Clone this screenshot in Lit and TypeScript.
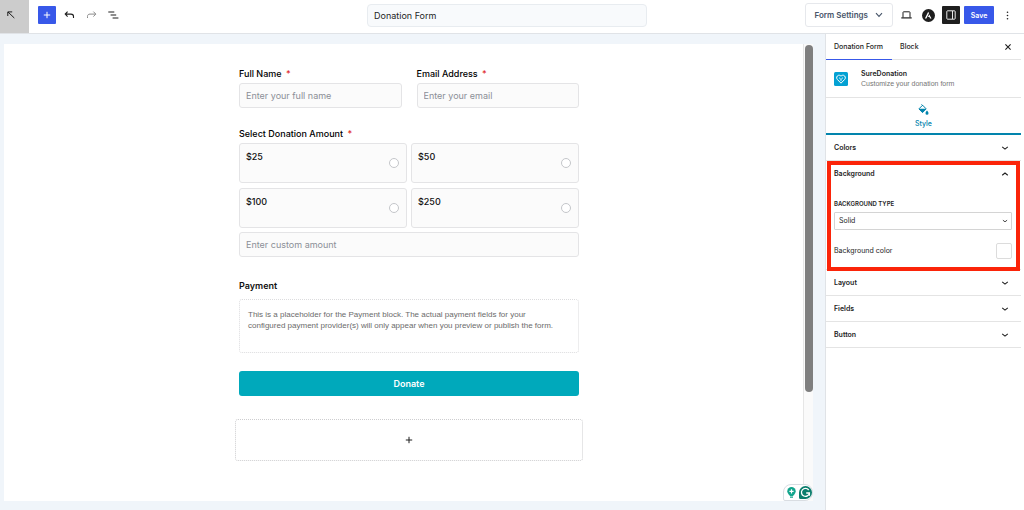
import { LitElement, html, css } from "lit";
import { customElement, property } from "lit/decorators.js";

const chevron = (up = false) => html`<svg class="chev" width="8" height="8" viewBox="0 0 8 8" fill="none" stroke="currentColor" stroke-width="1.1" aria-hidden="true">
  <path d=${up ? "M1.200 5.2 4 3l2.800 2.2" : "M1.200 2.9 4 5.1l2.800-2.2"} />
</svg>`;

const base = css`
  * { box-sizing: border-box; }
  button, input, select {
    font: inherit;
    color: inherit;
    margin: 0;
    padding: 0;
    border: 0;
    background: none;
    outline: 0;
  }
  svg { display: block; flex: none; }
`;

@customElement("editor-header")
export class EditorHeader extends LitElement {
  static styles = [base, css`
    :host {
      display: grid;
      grid-template-columns: 1fr minmax(120px, 280px) 1fr;
      height: 34px;
      padding-right: 10px;
      border-bottom: 1px solid #e0e3e7;
      background: #fff;
    }
    .left, .right { display: flex; align-items: center; padding-bottom: 3px; }
    .left { padding-bottom: 0; }
    .back {
      width: 29px; height: 33px; margin-right: 9px;
      padding-left: 7px; padding-bottom: 3px;
      background: #ccc;
      display: flex; align-items: center;
    }
    .tools { display: flex; align-items: center; gap: 11px; padding-bottom: 3px; }
    .add {
      width: 18px; height: 18px; margin-right: -3px;
      display: grid; place-items: center;
      background: #3858e9; color: #fff; border-radius: 1px;
    }
    .title {
      align-self: start; width: 100%; height: 23px; margin-top: 4px;
      padding: 0 6px;
      border: 1px solid #e8ecf0; border-radius: 4px;
      background: #f8fafc; color: #1e1e1e;
      font-size: 9px;
    }
    .right { justify-content: flex-end; padding-right: 5px; color: #1e1e1e; }
    .settings {
      display: flex; align-items: center; gap: 7px;
      height: 24px; padding: 0 9px 0 8px; margin-right: 8px;
      border: 1px solid #e6e8ec; border-radius: 3px;
      color: #475569; font-size: 8px; font-weight: 600; white-space: nowrap;
    }
    .device { margin-right: 10px; }
    .astra { margin-right: 7px; }
    .panel {
      width: 18px; height: 18px; margin-right: 4px;
      display: grid; place-items: center;
      background: #1e1e1e; color: #fff; border-radius: 1px;
    }
    .save {
      width: 30px; height: 18px; margin-right: 12px;
      background: #3858e9; color: #fff; border-radius: 1px;
      font-size: 7px; font-weight: 600;
    }
  `];

  render() {
    return html`
      <div class="left">
        <button class="back" aria-label="Back">
          <svg width="8" height="8" viewBox="0 0 8 8" fill="none" stroke="#1e1e1e" stroke-width="1"><path d="M.8 5V.9h4.400M1 1l6.300 6" /></svg>
        </button>
        <div class="tools">
          <button class="add" aria-label="Add block">
            <svg width="8" height="8" viewBox="0 0 8 8" stroke="currentColor"><path d="M4 .8v6.400M.8 4h6.400" /></svg>
          </button>
          <button aria-label="Undo">
            <svg width="11" height="8" viewBox="0 0 11 8" fill="none" stroke="#1e1e1e" stroke-width="1.1"><path d="M3.600.6 1.200 3.100l2.400 2.500M1.400 3.100H7c1.600 0 2.500.8 2.500 2.300V7" /></svg>
          </button>
          <button aria-label="Redo">
            <svg width="11" height="8" viewBox="0 0 11 8" fill="none" stroke="#8c8c8c" stroke-width="1"><path d="M7.400.6l2.400 2.500-2.400 2.500M9.600 3.100H4c-1.600 0-2.500.8-2.500 2.300V7" /></svg>
          </button>
          <button aria-label="Document overview">
            <svg width="11" height="8" viewBox="0 0 11 8" stroke="#1e1e1e" stroke-width="1"><path d="M.3 1h6M2.600 4h5.600M4.600 7h5.800" /></svg>
          </button>
        </div>
      </div>
      <input class="title" aria-label="Form title" value="Donation Form" />
      <div class="right">
        <button class="settings">Form Settings
          <svg width="8" height="6" viewBox="0 0 8 6" fill="none" stroke="currentColor" stroke-width="1.1"><path d="M1 1.200 4 4.400l3-3.200" /></svg>
        </button>
        <button class="device" aria-label="Preview">
          <svg width="11" height="8" viewBox="0 0 11 8" fill="none" stroke="currentColor"><path d="M2 6.500V1.400q0-.6.6-.6h5.800q.6 0 .6.6v5.100" /><path d="M.3 6.900h10.400" stroke-width="1.2" /></svg>
        </button>
        <button class="astra" aria-label="Theme settings">
          <svg width="13" height="13" viewBox="0 0 13 13"><circle cx="6.500" cy="6.500" r="6.500" fill="#1e1e1e" /><path d="M6.200 2.700 2.900 9.400h1.500l2.600-5.100zM7.300 5.600 6 8.100h1.400l.6 1.300h1.500z" fill="#fff" /></svg>
        </button>
        <button class="panel" aria-label="Settings sidebar">
          <svg width="10" height="10" viewBox="0 0 10 10" fill="none" stroke="currentColor"><rect x=".8" y=".8" width="8.400" height="8.400" rx=".8" stroke-width=".9" /><path d="M6.500 1v8" stroke-width=".9" /></svg>
        </button>
        <button class="save">Save</button>
        <button aria-label="Options">
          <svg width="3" height="9" viewBox="0 0 3 9" fill="currentColor"><circle cx="1.500" cy="1.200" r=".8" /><circle cx="1.500" cy="4.500" r=".8" /><circle cx="1.500" cy="7.800" r=".8" /></svg>
        </button>
      </div>
    `;
  }
}

@customElement("donation-form")
export class DonationForm extends LitElement {
  static styles = [base, css`
    :host { display: block; width: 100%; max-width: 348px; margin: 0 auto; padding-top: 24px; color: #111; font-size: 9px; line-height: 12px; }
    form { padding: 0 4px; }
    .label { display: block; font-weight: 500; color: #000; line-height: 12px; margin-bottom: 3px; }
    .req { color: #e02b2b; margin-left: 2px; }
    .pair { display: grid; grid-template-columns: 1fr 1fr; gap: 15px; margin-bottom: 20px; }
    .text {
      width: 100%; height: 25px; padding: 0 6px; display: block;
      border: 1px solid #e4e4e6; border-radius: 3px; background: #fbfbfb;
    }
    .text::placeholder { color: #8b8f97; opacity: 1; }
    fieldset { border: 0; margin: 0 0 23px; padding: 0; min-width: 0; }
    legend { padding: 0; }
    .amounts { display: grid; grid-template-columns: 1fr 1fr; gap: 5px 4px; margin-bottom: 4px; }
    .amount {
      display: flex; justify-content: space-between; height: 40px; padding: 7px 7px 0 6px;
      border: 1px solid #e4e4e6; border-radius: 3px; background: #fbfbfb; font-weight: 500;
    }
    .amount input {
      appearance: none; width: 10px; height: 10px; margin-top: 7px;
      border: 1px solid #c4c6ca; border-radius: 50%; background: #fff;
    }
    h2 { margin: 0 0 7px; font-size: 9px; line-height: 12px; font-weight: 600; }
    .note {
      min-height: 54px; margin: 0 0 18px; padding: 9px 16px 9px 8px; border: 1px dotted #dcdcde; border-radius: 3px;
      color: #6b6b6b; font-family: "Liberation Sans", Arial, sans-serif; font-size: 8px; line-height: 11px;
    }
    .donate {
      width: 100%; height: 25px; display: block; border-radius: 3px;
      background: #00a9bb; color: #fff; font-weight: 600; text-align: center;
    }
    .append {
      width: 100%; height: 42px; margin-top: 23px;
      display: grid; place-items: center;
      border: 1px dotted #cdcdcf; border-radius: 3px;
    }
  `];

  render() {
    const req = html`<span class="req">*</span>`;
    return html`
      <form>
        <div class="pair">
          <div>
            <label class="label" for="name">Full Name ${req}</label>
            <input class="text" id="name" placeholder="Enter your full name" />
          </div>
          <div>
            <label class="label" for="email">Email Address ${req}</label>
            <input class="text" id="email" type="email" placeholder="Enter your email" />
          </div>
        </div>
        <fieldset>
          <legend class="label">Select Donation Amount ${req}</legend>
          <div class="amounts">
            ${["$25", "$50", "$100", "$250"].map((a) => html`
              <label class="amount">${a}<input type="radio" name="amount" value=${a} /></label>`)}
          </div>
          <input class="text" aria-label="Custom amount" placeholder="Enter custom amount" />
        </fieldset>
        <h2>Payment</h2>
        <p class="note">This is a placeholder for the Payment block. The actual payment fields for your configured payment provider(s) will only appear when you preview or publish the form.</p>
        <button class="donate" type="button">Donate</button>
      </form>
      <button class="append" aria-label="Add block">
        <svg width="8" height="8" viewBox="0 0 8 8" stroke="#1e1e1e"><path d="M4 .8v6.400M.8 4h6.400" /></svg>
      </button>
    `;
  }
}

@customElement("panel-section")
export class PanelSection extends LitElement {
  @property() heading = "";
  @property({ type: Boolean }) open = false;
  @property({ type: Boolean }) highlighted = false;

  static styles = [base, css`
    :host { display: block; position: relative; border-bottom: 1px solid #e4e4e4; }
    .head {
      width: 100%; height: 25px; padding: 0 12px 0 8px;
      display: flex; align-items: center; justify-content: space-between;
      font-size: 7px; font-weight: 600; color: #1e1e1e;
    }
    .mark { position: absolute; inset: 0 1px -2px 1px; border: 4px solid #fb2409; pointer-events: none; }
  `];

  render() {
    return html`
      <button class="head" aria-expanded=${this.open ? "true" : "false"}>${this.heading}${chevron(this.open)}</button>
      ${this.open ? html`<slot></slot>` : ""}
      ${this.highlighted ? html`<div class="mark"></div>` : ""}
    `;
  }
}

@customElement("settings-sidebar")
export class SettingsSidebar extends LitElement {
  static styles = [base, css`
    :host { display: block; background: #fff; border-left: 1px solid #e0e3e7; color: #1e1e1e; font-size: 7px; line-height: 10px; }
    .tabs { display: flex; height: 26px; border-bottom: 1px solid #e4e4e4; }
    .tab { height: 26px; padding: 0 9px 0 8px; font-weight: 500; }
    .tab.on { border-bottom: 1px solid #3858e9; }
    .close { margin-left: auto; padding-right: 9px; }
    .block { display: flex; align-items: center; gap: 13px; height: 38px; padding: 0 8px; border-bottom: 1px solid #e4e4e4; }
    .name { margin: 0; font-size: 7px; line-height: 10px; font-weight: 600; }
    .desc { margin: 0; font-family: "Liberation Sans", Arial, sans-serif; line-height: 10px; color: #757575; }
    .style {
      width: 100%; height: 37px; padding-top: 2px;
      display: flex; flex-direction: column; align-items: center; justify-content: center; gap: 4px;
      border-bottom: 2px solid #0284ad; color: #0284ad; font-weight: 500; line-height: 10px;
    }
    .body { padding: 13px 9px 10px 8px; }
    .cap { display: block; font-size: 6px; line-height: 10px; font-weight: 600; text-transform: uppercase; margin-bottom: 3px; }
    .pick { position: relative; color: #1e1e1e; }
    .pick select {
      appearance: none; display: block; width: 100%; height: 18px; padding: 0 4px;
      border: 1px solid #d4d4d4; border-radius: 1px; background: #fff;
    }
    .pick svg { position: absolute; right: 4px; top: 6px; width: 6px; height: 6px; pointer-events: none; }
    .color { display: flex; align-items: center; justify-content: space-between; margin-top: 13px; }
    .swatch { width: 16px; height: 16px; border: 1px solid #dcdcdc; border-radius: 2px; background: #fff; }
  `];

  render() {
    return html`
      <div class="tabs" role="tablist">
        <button class="tab on" role="tab" aria-selected="true">Donation Form</button>
        <button class="tab" role="tab" aria-selected="false">Block</button>
        <button class="close" aria-label="Close settings">
          <svg width="8" height="8" viewBox="0 0 8 8" stroke="#1e1e1e" stroke-width="1.1"><path d="m1.400 1.400 5.200 5.200M6.600 1.400 1.400 6.600" /></svg>
        </button>
      </div>
      <div class="block">
        <svg width="14" height="14" viewBox="0 0 14 14" fill="none">
          <rect width="14" height="14" rx="1.500" fill="#03a1d3" />
          <path d="M7 11.200 3.300 7.400C1.200 5 4.600 1.500 7 4.200c2.400-2.700 5.800.8 3.700 3.200z" stroke="#fff" stroke-width="1" />
          <path d="M5 5.600 7 7.500l2-1.900M7 7.500v1.600" stroke="#fff" stroke-width=".8" />
        </svg>
        <div>
          <h2 class="name">SureDonation</h2>
          <p class="desc">Customize your donation form</p>
        </div>
      </div>
      <button class="style">
        <svg width="11" height="11" viewBox="0 0 11 11" fill="none">
          <path d="M4.600 1.200 8.200 4.900 4.500 8.600.9 4.900z" stroke="#0284ad" stroke-width="1" stroke-linejoin="round" />
          <path d="M1 4.700h7L4.500 8.700z" fill="#0284ad" /><path d="M3.400.3l1.600 1.600" stroke="#0284ad" />
          <path d="M9 6.600c.9 1.200 1.500 1.900 1.500 2.700a1.500 1.500 0 0 1-3 0c0-.8.6-1.500 1.500-2.700z" fill="#0284ad" />
        </svg>
        Style
      </button>
      <panel-section heading="Colors"></panel-section>
      <panel-section heading="Background" open highlighted>
        <div class="body">
          <label class="cap" for="bgtype">Background type</label>
          <div class="pick">
            <select id="bgtype"><option>Solid</option><option>Gradient</option><option>Image</option></select>
            ${chevron()}
          </div>
          <div class="color">
            <label for="bgcolor">Background color</label>
            <button class="swatch" id="bgcolor"></button>
          </div>
        </div>
      </panel-section>
      <panel-section heading="Layout"></panel-section>
      <panel-section heading="Fields"></panel-section>
      <panel-section heading="Button"></panel-section>
    `;
  }
}

@customElement("app-root")
export class AppRoot extends LitElement {
  static styles = [base, css`
    :host {
      display: flex; flex-direction: column; min-height: 100vh;
      background: #fff; font-family: Inter, "Liberation Sans", sans-serif;
    }
    .main { flex: 1; display: grid; grid-template-columns: minmax(0, 1fr) 196px; padding-right: 3px; }
    .stage { background: #f0f5fa; padding: 10px 12px 9px 4px; display: flex; position: relative; }
    .canvas { flex: 1; min-width: 0; background: #fff; padding-left: 11px; }
    .track { width: 10px; padding-left: 1px; background: #fafafa; border-left: 1px solid #e6e6e6; }
    .thumb { height: 76%; margin-top: 1px; border-radius: 4px; background: #7f7f7f; }
    .assist {
      position: absolute; right: 12px; bottom: 9px;
      display: flex; align-items: center; gap: 3px;
      height: 17px; padding: 0 0 0 3px;
      background: #fff; border: 1px solid #d9dde2; border-radius: 8px 8px 8px 2px;
    }
  `];

  render() {
    return html`
      <editor-header></editor-header>
      <div class="main">
        <main class="stage">
          <div class="canvas"><donation-form></donation-form></div>
          <div class="track"><div class="thumb"></div></div>
          <div class="assist">
            <svg width="9" height="11" viewBox="0 0 9 11">
              <circle cx="4.500" cy="4.300" r="4.200" fill="#12a58c" />
              <path d="M2.600 7h3.800v2H2.600zM3 9.600h3v1.200H3z" fill="#12a58c" />
              <path d="M4.500 2.200v4.200M2.400 4.300h4.200" stroke="#fff" stroke-width="1.200" />
            </svg>
            <svg width="13" height="13" viewBox="0 0 13 13" fill="none">
              <path d="M6.500 0A6.500 6.500 0 1 1 6.500 13H1.500Q0 13 0 11.500V6.500A6.500 6.500 0 0 1 6.500 0z" fill="#0b7d6c" />
              <path d="M9.700 4A4 4 0 1 0 10.400 7H7.200M10.400 7v2.800" stroke="#fff" stroke-width="1.300" />
            </svg>
          </div>
        </main>
        <settings-sidebar></settings-sidebar>
      </div>
    `;
  }
}
